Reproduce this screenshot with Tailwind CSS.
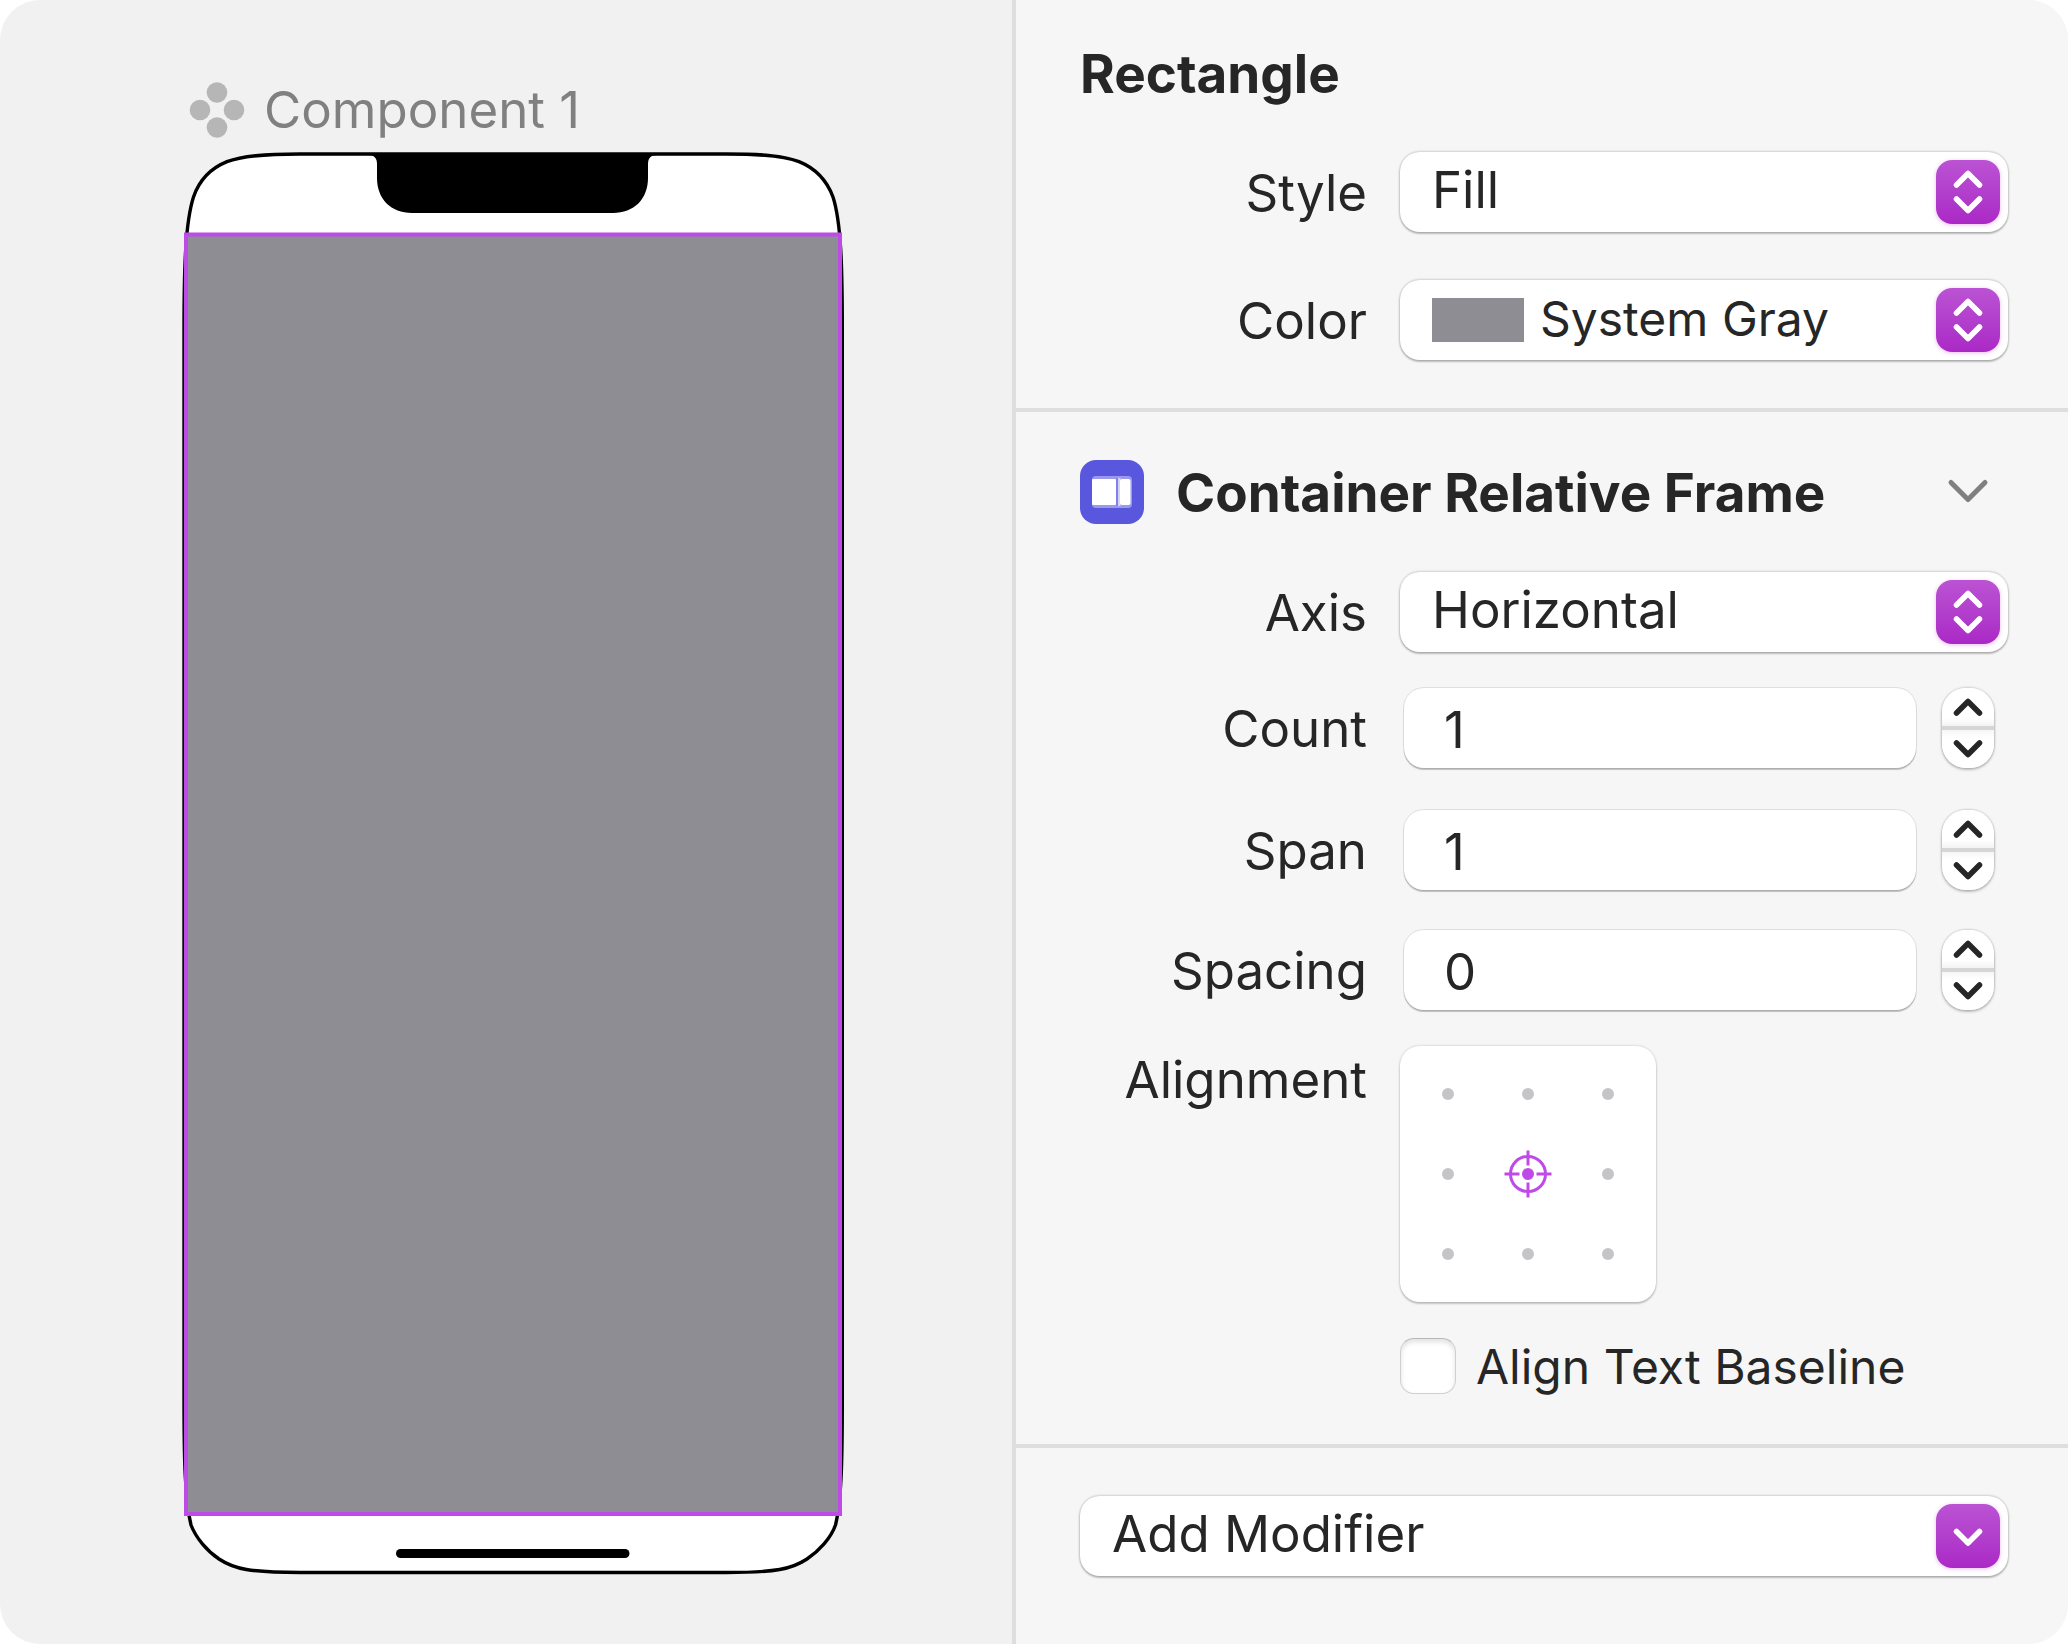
<!DOCTYPE html>
<html lang="en">
<head>
    <meta charset="UTF-8">
    <meta name="viewport" content="width=device-width, initial-scale=1.0">
    <title>Component 1 - Container Relative Frame</title>
    <script src="https://cdn.jsdelivr.net/npm/@tailwindcss/browser@4"></script>
</head>
<body class="bg-white font-['Inter',sans-serif] text-[51px] leading-16 text-[#262626]">

    <div class="flex min-h-screen overflow-hidden rounded-[40px] bg-[#f1f1f1]">

        <!-- Canvas -->
        <main class="flex-1 pt-[78px] pl-[182px]">
            <div class="flex h-16 items-center gap-[19px] pl-[7px] text-[#808080]">
                <svg class="size-14 shrink-0" viewBox="0 0 56 56" fill="#b6b6b6">
                    <circle cx="28" cy="10.500" r="10.300"/>
                    <circle cx="11" cy="28" r="10.300"/>
                    <circle cx="45" cy="28" r="10.300"/>
                    <circle cx="28" cy="45.500" r="10.300"/>
                </svg>
                <span class="whitespace-nowrap">Component 1</span>
            </div>

            <!-- Device preview -->
            <svg class="mt-2 h-[1428px] w-[664px]" viewBox="182 150 664 1428">
                <path fill="#fff" stroke="#000" stroke-width="3.4" d="M184 330C184 265 185.500 222 193.500 197C199 181 209 169 227 161.700C242 155.700 264 154 300 154H726C762 154 784 155.700 799 161.700C817 169 827 181 833 197C841 222 842.300 265 842.300 330V1400C842.300 1460 841.500 1500 835.500 1525C831 1538 819 1551 807 1559C792 1569 776 1572.500 726 1572.500H300C250 1572.500 234 1569 219 1559C207 1551 196 1538 191 1525C185 1500 184 1460 184 1400Z"/>
                <path d="M368 155C374 155 377 158 377 164V178C377 199 391 213 412 213H613C634 213 648 199 648 178V164C648 158 651 155 657 155Z"/>
                <rect x="396" y="1549" width="233.500" height="9" rx="4.500"/>
                <rect x="186" y="234.500" width="654" height="1279.500" fill="#8e8d93" stroke="#be4be8" stroke-width="4"/>
            </svg>
        </main>

        <!-- Inspector -->
        <aside class="w-[1056px] shrink-0 border-l-4 border-[#dedede] bg-[#f6f6f6]">

            <section class="border-b-4 border-[#dedede] pt-[42px] pr-[60px] pb-12 pl-16">
                <h2 class="text-[53px] font-bold">Rectangle</h2>

                <div class="mt-[46px] grid grid-cols-[287px_1fr] items-center gap-x-[33px] gap-y-12">
                    <label for="style" class="pt-0.5 text-right">Style</label>
                    <div class="grid h-20 items-center rounded-[20px] bg-white shadow-[0_0_2px_1px_rgba(0,0,0,0.16),0_2px_2px_rgba(0,0,0,0.2)]">
                        <select id="style" class="col-start-1 row-start-1 h-20 w-full appearance-none bg-transparent pb-1 pl-8">
                            <option>Fill</option>
                            <option>Stroke</option>
                        </select>
                        <span class="pointer-events-none col-start-1 row-start-1 mr-2 justify-self-end rounded-2xl bg-linear-to-b from-[#bb52d3] to-[#aa28c6] shadow-[0_1px_4px_rgba(170,40,198,0.3)]">
                            <svg class="size-16" viewBox="0 0 64 64" fill="none" stroke="#fff" stroke-width="5.500" stroke-linecap="round" stroke-linejoin="round"><path d="M20.500 25L32 13.500L43.500 25M20.500 39L32 50.500L43.500 39"/></svg>
                        </span>
                    </div>

                    <label for="color" class="pt-0.5 text-right">Color</label>
                    <div class="grid h-20 items-center rounded-[20px] bg-white shadow-[0_0_2px_1px_rgba(0,0,0,0.16),0_2px_2px_rgba(0,0,0,0.2)]">
                        <span class="col-start-1 row-start-1 ml-8 h-11 w-[92px] bg-[#8e8d93]"></span>
                        <select id="color" class="col-start-1 row-start-1 h-20 w-full appearance-none bg-transparent pb-0.5 pl-[140px] text-5xl leading-16">
                            <option>System Gray</option>
                            <option>System Blue</option>
                        </select>
                        <span class="pointer-events-none col-start-1 row-start-1 mr-2 justify-self-end rounded-2xl bg-linear-to-b from-[#bb52d3] to-[#aa28c6] shadow-[0_1px_4px_rgba(170,40,198,0.3)]">
                            <svg class="size-16" viewBox="0 0 64 64" fill="none" stroke="#fff" stroke-width="5.500" stroke-linecap="round" stroke-linejoin="round"><path d="M20.500 25L32 13.500L43.500 25M20.500 39L32 50.500L43.500 39"/></svg>
                        </span>
                    </div>
                </div>
            </section>

            <section class="border-b-4 border-[#dedede] pt-12 pr-[60px] pb-[50px] pl-16">
                <div class="flex h-16 items-center">
                    <svg class="mr-8 size-16 shrink-0" viewBox="0 0 64 64">
                        <rect width="64" height="64" rx="16" fill="#5957dd"/>
                        <rect x="12" y="16" width="40" height="32" rx="4" fill="#9b99ec"/>
                        <rect x="12" y="19" width="24" height="26" rx="1" fill="#fff"/>
                        <rect x="36" y="18" width="2" height="28" fill="#8280e7"/>
                        <rect x="38" y="18" width="2.500" height="28" fill="#d5d4f8"/>
                        <rect x="40" y="19" width="10.500" height="26" rx="2" fill="#fff"/>
                    </svg>
                    <h2 class="flex-1 pt-0.5 text-[53px] font-bold whitespace-nowrap">Container Relative Frame</h2>
                    <button type="button" aria-label="Collapse" class="mr-2">
                        <svg class="size-16" viewBox="0 0 64 64" fill="none" stroke="#808080" stroke-width="5" stroke-linecap="round" stroke-linejoin="round"><path d="M15 22.500L32 39.500L49 22.500"/></svg>
                    </button>
                </div>

                <div class="mt-12 grid grid-cols-[287px_1fr] items-center gap-x-[33px]">
                    <label for="axis" class="pt-0.5 text-right">Axis</label>
                    <div class="grid h-20 items-center rounded-[20px] bg-white shadow-[0_0_2px_1px_rgba(0,0,0,0.16),0_2px_2px_rgba(0,0,0,0.2)]">
                        <select id="axis" class="col-start-1 row-start-1 h-20 w-full appearance-none bg-transparent pb-1 pl-8">
                            <option>Horizontal</option>
                            <option>Vertical</option>
                        </select>
                        <span class="pointer-events-none col-start-1 row-start-1 mr-2 justify-self-end rounded-2xl bg-linear-to-b from-[#bb52d3] to-[#aa28c6] shadow-[0_1px_4px_rgba(170,40,198,0.3)]">
                            <svg class="size-16" viewBox="0 0 64 64" fill="none" stroke="#fff" stroke-width="5.500" stroke-linecap="round" stroke-linejoin="round"><path d="M20.500 25L32 13.500L43.500 25M20.500 39L32 50.500L43.500 39"/></svg>
                        </span>
                    </div>
                </div>

                <div class="mt-9 grid grid-cols-[287px_1fr] items-center gap-x-[33px]">
                    <label for="count" class="pt-0.5 text-right">Count</label>
                    <div class="flex gap-[26px] pr-3.5 pl-1">
                        <input id="count" type="text" inputmode="numeric" value="1" class="h-20 w-full min-w-0 flex-1 rounded-[20px] bg-white pt-0.5 pl-10 shadow-[0_0_0_1px_rgba(0,0,0,0.09),0_2px_1px_rgba(0,0,0,0.22)]">
                        <div class="flex h-20 w-[52px] flex-col overflow-hidden rounded-3xl bg-white shadow-[0_0_2px_1px_rgba(0,0,0,0.15),0_2px_3px_rgba(0,0,0,0.2)]">
                            <button type="button" aria-label="Increase count" class="h-[42px] border-b-4 border-[#d6d6d6] bg-linear-to-b from-white from-80% to-[#f3f3f3]">
                                <svg class="h-[38px] w-[52px]" viewBox="0 0 52 38" fill="none" stroke="#262626" stroke-width="5.500" stroke-linecap="round" stroke-linejoin="round"><path d="M14.500 25L26 13.500L37.500 25"/></svg>
                            </button>
                            <button type="button" aria-label="Decrease count" class="h-[38px] bg-linear-to-b from-[#f6f6f6] to-white to-20%">
                                <svg class="h-[38px] w-[52px]" viewBox="0 0 52 38" fill="none" stroke="#262626" stroke-width="5.500" stroke-linecap="round" stroke-linejoin="round"><path d="M14.500 13L26 24.500L37.500 13"/></svg>
                            </button>
                        </div>
                    </div>
                </div>

                <div class="mt-[42px] grid grid-cols-[287px_1fr] items-center gap-x-[33px]">
                    <label for="span" class="pt-0.5 text-right">Span</label>
                    <div class="flex gap-[26px] pr-3.5 pl-1">
                        <input id="span" type="text" inputmode="numeric" value="1" class="h-20 w-full min-w-0 flex-1 rounded-[20px] bg-white pt-0.5 pl-10 shadow-[0_0_0_1px_rgba(0,0,0,0.09),0_2px_1px_rgba(0,0,0,0.22)]">
                        <div class="flex h-20 w-[52px] flex-col overflow-hidden rounded-3xl bg-white shadow-[0_0_2px_1px_rgba(0,0,0,0.15),0_2px_3px_rgba(0,0,0,0.2)]">
                            <button type="button" aria-label="Increase span" class="h-[42px] border-b-4 border-[#d6d6d6] bg-linear-to-b from-white from-80% to-[#f3f3f3]">
                                <svg class="h-[38px] w-[52px]" viewBox="0 0 52 38" fill="none" stroke="#262626" stroke-width="5.500" stroke-linecap="round" stroke-linejoin="round"><path d="M14.500 25L26 13.500L37.500 25"/></svg>
                            </button>
                            <button type="button" aria-label="Decrease span" class="h-[38px] bg-linear-to-b from-[#f6f6f6] to-white to-20%">
                                <svg class="h-[38px] w-[52px]" viewBox="0 0 52 38" fill="none" stroke="#262626" stroke-width="5.500" stroke-linecap="round" stroke-linejoin="round"><path d="M14.500 13L26 24.500L37.500 13"/></svg>
                            </button>
                        </div>
                    </div>
                </div>

                <div class="mt-10 grid grid-cols-[287px_1fr] items-center gap-x-[33px]">
                    <label for="spacing" class="pt-0.5 text-right">Spacing</label>
                    <div class="flex gap-[26px] pr-3.5 pl-1">
                        <input id="spacing" type="text" inputmode="numeric" value="0" class="h-20 w-full min-w-0 flex-1 rounded-[20px] bg-white pt-0.5 pl-10 shadow-[0_0_0_1px_rgba(0,0,0,0.09),0_2px_1px_rgba(0,0,0,0.22)]">
                        <div class="flex h-20 w-[52px] flex-col overflow-hidden rounded-3xl bg-white shadow-[0_0_2px_1px_rgba(0,0,0,0.15),0_2px_3px_rgba(0,0,0,0.2)]">
                            <button type="button" aria-label="Increase spacing" class="h-[42px] border-b-4 border-[#d6d6d6] bg-linear-to-b from-white from-80% to-[#f3f3f3]">
                                <svg class="h-[38px] w-[52px]" viewBox="0 0 52 38" fill="none" stroke="#262626" stroke-width="5.500" stroke-linecap="round" stroke-linejoin="round"><path d="M14.500 25L26 13.500L37.500 25"/></svg>
                            </button>
                            <button type="button" aria-label="Decrease spacing" class="h-[38px] bg-linear-to-b from-[#f6f6f6] to-white to-20%">
                                <svg class="h-[38px] w-[52px]" viewBox="0 0 52 38" fill="none" stroke="#262626" stroke-width="5.500" stroke-linecap="round" stroke-linejoin="round"><path d="M14.500 13L26 24.500L37.500 13"/></svg>
                            </button>
                        </div>
                    </div>
                </div>

                <div class="mt-9 grid grid-cols-[287px_1fr] items-start gap-x-[33px]">
                    <span id="alignment" class="pt-0.5 text-right">Alignment</span>
                    <div role="radiogroup" aria-labelledby="alignment" class="grid size-64 grid-cols-3 grid-rows-3 place-items-center rounded-[20px] bg-white p-2 shadow-[0_0_2px_1px_rgba(0,0,0,0.1),0_2px_2px_rgba(0,0,0,0.18)]">
                        <input type="radio" name="align" aria-label="Top leading" class="size-3 appearance-none rounded-full bg-[#c5c5c7]">
                        <input type="radio" name="align" aria-label="Top" class="size-3 appearance-none rounded-full bg-[#c5c5c7]">
                        <input type="radio" name="align" aria-label="Top trailing" class="size-3 appearance-none rounded-full bg-[#c5c5c7]">
                        <input type="radio" name="align" aria-label="Leading" class="size-3 appearance-none rounded-full bg-[#c5c5c7]">
                        <div class="grid place-items-center">
                            <input type="radio" name="align" aria-label="Center" checked class="col-start-1 row-start-1 size-3 appearance-none rounded-full bg-[#bf4ae8]">
                            <svg class="pointer-events-none col-start-1 row-start-1 size-12" viewBox="0 0 48 48" fill="none" stroke="#bf4ae8" stroke-width="3">
                                <circle cx="24" cy="24" r="17.500"/>
                                <path d="M24 0.500V15.500M24 32.500V47.500M0.500 24H15.500M32.500 24H47.500"/>
                            </svg>
                        </div>
                        <input type="radio" name="align" aria-label="Trailing" class="size-3 appearance-none rounded-full bg-[#c5c5c7]">
                        <input type="radio" name="align" aria-label="Bottom leading" class="size-3 appearance-none rounded-full bg-[#c5c5c7]">
                        <input type="radio" name="align" aria-label="Bottom" class="size-3 appearance-none rounded-full bg-[#c5c5c7]">
                        <input type="radio" name="align" aria-label="Bottom trailing" class="size-3 appearance-none rounded-full bg-[#c5c5c7]">
                    </div>
                </div>

                <div class="mt-9 flex h-14 items-center gap-5 pl-80">
                    <input id="baseline" type="checkbox" class="size-14 shrink-0 appearance-none rounded-[14px] border border-[#cfcfcf] border-t-[#b8b8b8] bg-white shadow-[inset_0_3px_5px_rgba(0,0,0,0.12)]">
                    <label for="baseline" class="pt-0.5 text-5xl leading-16 whitespace-nowrap">Align Text Baseline</label>
                </div>
            </section>

            <section class="pt-12 pr-[60px] pb-12 pl-16">
                <div class="grid h-20 items-center rounded-[20px] bg-white shadow-[0_0_2px_1px_rgba(0,0,0,0.16),0_2px_2px_rgba(0,0,0,0.2)]">
                    <select aria-label="Add Modifier" class="col-start-1 row-start-1 h-20 w-full appearance-none bg-transparent pb-1 pl-8">
                        <option>Add Modifier</option>
                    </select>
                    <span class="pointer-events-none col-start-1 row-start-1 mr-2 justify-self-end rounded-2xl bg-linear-to-b from-[#bb52d3] to-[#aa28c6] shadow-[0_1px_4px_rgba(170,40,198,0.3)]">
                        <svg class="size-16" viewBox="0 0 64 64" fill="none" stroke="#fff" stroke-width="5.500" stroke-linecap="round" stroke-linejoin="round"><path d="M20.500 27.500L32 39L43.500 27.500"/></svg>
                    </span>
                </div>
            </section>
        </aside>
    </div>

</body>
</html>
